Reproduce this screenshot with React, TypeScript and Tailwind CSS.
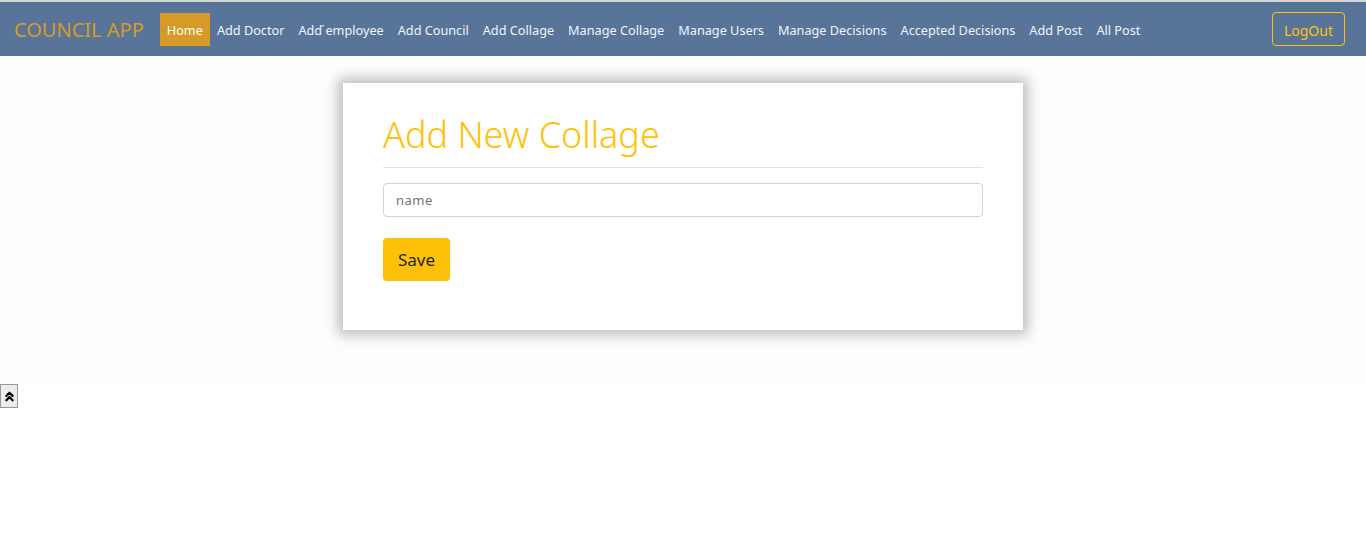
import { ChevronsUp } from 'lucide-react'

const links = [
  'Add Doctor',
  'Add ́employee',
  'Add Council',
  'Add Collage',
  'Manage Collage',
  'Manage Users',
  'Manage Decisions',
  'Accepted Decisions',
  'Add Post',
  'All Post',
]

export default function App() {
  return (
    <div className="min-h-[551px] bg-white font-['Noto_Sans',sans-serif] text-[13px]">
      <div className="h-[2px] bg-[#d6d6d6]" />
      <nav className="flex h-[54px] items-center bg-[#587599] pl-[14px] pr-[21px]">
        <a className="mr-[16px] mt-[2px] text-[20px] leading-none text-[#d69a28]">COUNCIL APP</a>
        <a className="flex h-[33px] items-center bg-[#d69a28] px-[7px] pt-[3px] text-[12.7px] text-white">Home</a>
        {links.map((label) => (
          <a key={label} className="flex h-[33px] items-center px-[7px] pt-[3px] text-[12.7px] text-[#f1f4f8]">
            {label}
          </a>
        ))}
        <button
          type="button"
          className="ml-auto h-[34px] rounded-[4px] border border-[#ffc107] px-[11px] pt-[2px] text-[14px] text-[#ffc107]"
        >
          LogOut
        </button>
      </nav>

      <section className="flex h-[328px] justify-center bg-[#fdfdfd] pt-[27px]">
        <div className="h-[247px] w-[680px] bg-white px-10 pt-[30px] shadow-[0_0_12px_5px_rgba(0,0,0,0.25)]">
          <h2 className="text-[36px] leading-[43px] font-light text-[#ffc107]">Add New Collage</h2>
          <hr className="mt-[11px] border-[#e2e2e2]" />
          <input
            placeholder="name"
            className="mt-[15px] h-[34px] w-full rounded-[4px] border border-[#ced4da] px-3 text-[13px] tracking-[0.5px] text-[#495057] placeholder:text-[#6c757d]"
          />
          <button
            type="button"
            className="mt-[21px] h-[43px] rounded-[4px] bg-[#ffc107] px-[15px] text-[17px] text-[#212529]"
          >
            Save
          </button>
        </div>
      </section>

      <button
        type="button"
        className="flex h-[24px] w-[18px] items-center justify-center border border-[#999] bg-[#ececec]"
      >
        <ChevronsUp size={15} strokeWidth={3.5} className="text-black" />
      </button>
    </div>
  )
}
